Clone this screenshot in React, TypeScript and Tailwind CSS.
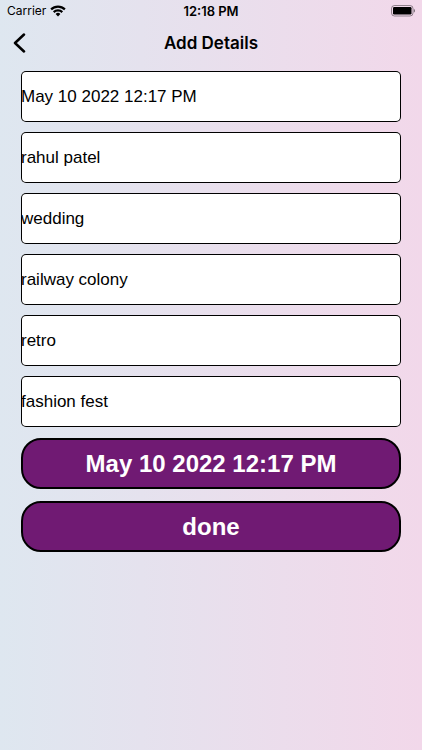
import { useState } from "react";

const initialFields = [
  { id: "date", label: "Date", value: "May 10 2022 12:17 PM" },
  { id: "name", label: "Name", value: "rahul patel" },
  { id: "event", label: "Event", value: "wedding" },
  { id: "address", label: "Address", value: "railway colony" },
  { id: "theme", label: "Theme", value: "retro" },
  { id: "details", label: "Details", value: "fashion fest" },
];

function StatusBar() {
  return (
    <div className="grid h-[22px] grid-cols-[1fr_auto_1fr] items-center px-[7px] leading-4">
      <div className="flex items-center gap-1 text-[12px]">
        <span>Carrier</span>
        {/* Wifi */}
        <svg width="16" height="12" viewBox="0 0 16 12" fill="none" stroke="black" strokeWidth="2.2">
          <path d="M1.1 4.4a9.8 9.8 0 0 1 13.8 0" />
          <path d="M3.7 7.1a6.1 6.1 0 0 1 8.6 0" />
          <path d="M8 11.4 5.6 9a3.4 3.4 0 0 1 4.8 0z" fill="black" stroke="none" />
        </svg>
      </div>
      <span className="text-[13px] font-semibold">12:18 PM</span>
      {/* Battery */}
      <svg className="justify-self-end" width="24" height="12" viewBox="0 0 24 12">
        <rect x="0.5" y="0.5" width="21.5" height="10.5" rx="3" fill="none" stroke="black" strokeOpacity="0.4" />
        <rect x="2" y="2" width="18.5" height="7.5" rx="1.2" />
        <path d="M22.9 4v3.6c.8-.3 1.1-1 1.1-1.8S23.7 4.3 22.9 4z" fillOpacity="0.5" />
      </svg>
    </div>
  );
}

export default function App() {
  const [fields, setFields] = useState(initialFields);

  const updateField = (id: string, value: string) => {
    setFields(fields.map((f) => (f.id === id ? { ...f, value } : f)));
  };

  return (
    <div className="min-h-screen bg-linear-to-r from-[#dee7f0] to-[#f2d8ea] font-['Inter',sans-serif] text-black">
      <StatusBar />

      {/* Header */}
      <header className="grid h-[42px] grid-cols-[44px_1fr_44px] items-center">
        <button type="button" aria-label="Back" className="flex h-full items-center pl-[13px]">
          <svg width="13" height="20" viewBox="0 0 13 20" fill="none" stroke="black" strokeWidth="2.5" strokeLinecap="round" strokeLinejoin="round">
            <path d="M11 1.5 2 10l9 8.5" />
          </svg>
        </button>
        <h1 className="text-center text-[17px] font-semibold leading-6">Add Details</h1>
      </header>

      {/* Form */}
      <form
        onSubmit={(e) => e.preventDefault()}
        className="flex flex-col gap-[11px] px-[21px] pt-[7px] font-['Liberation_Sans',sans-serif]"
      >
        <div className="flex flex-col gap-2.5">
          {fields.map((field) => (
            <input
              key={field.id}
              id={field.id}
              type="text"
              aria-label={field.label}
              value={field.value}
              onChange={(e) => updateField(field.id, e.target.value)}
              className="h-[51px] w-full rounded-[5px] bg-white text-[17px] ring-1 ring-black ring-inset outline-none"
            />
          ))}
        </div>
        <div className="flex flex-col gap-3">
          <button type="button" className="h-[51px] rounded-[20px] border-2 border-black bg-[#701a73] text-[24px] font-bold text-white">
            {fields[0].value}
          </button>
          <button type="submit" className="h-[51px] rounded-[20px] border-2 border-black bg-[#701a73] text-[24px] font-bold text-white">
            done
          </button>
        </div>
      </form>
    </div>
  );
}
